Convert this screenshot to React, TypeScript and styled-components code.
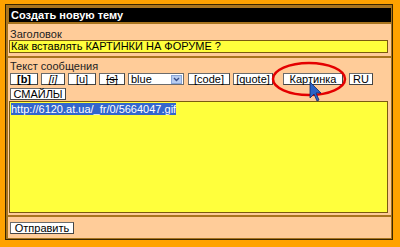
import React from "react";
import styled, { createGlobalStyle } from "styled-components";

const Global = createGlobalStyle`
  html, body {
    margin: 0;
    padding: 0;
    background: #ffa200;
    font-family: "Liberation Sans", Arial, sans-serif;
  }
`;

const Page = styled.div`
  width: 400px;
  height: 247px;
  padding: 4px 7px 0 5px;
  box-sizing: border-box;
  position: relative;
`;

const Frame = styled.div`
  border: 1px solid #3a2600;
  background: #a8741e;
  padding: 3px 1px 1px 2px;
  display: flex;
  flex-direction: column;
  gap: 2px;
`;

const Header = styled.div`
  background: #000;
  color: #fff;
  font-weight: bold;
  font-size: 11px;
  height: 14px;
  line-height: 14px;
  padding-left: 2px;
  margin-left: 1px;
`;

const Section = styled.div<{ $pad: string }>`
  background: #ffcc99;
  padding: ${(p) => p.$pad};
  font-size: 11px;
  color: #222;
`;

const Label = styled.div`
  line-height: 12px;
  padding-left: 1px;
`;

const TitleInput = styled.div`
  background: #ffff3c;
  border: 1px solid #7a5a10;
  height: 11px;
  line-height: 11px;
  color: #000;
  padding-left: 1px;
`;

const Toolbar = styled.div`
  display: flex;
  flex-wrap: wrap;
  gap: 3px 3px;
  padding-left: 1px;
  margin-top: 1px;
`;

const Btn = styled.div<{ $w: number; $style?: string }>`
  width: ${(p) => p.$w}px;
  height: 10px;
  line-height: 10px;
  background: #fff;
  border: 1px solid #6b6b6b;
  border-right-color: #444;
  border-bottom-color: #444;
  text-align: center;
  font-size: 11px;
  color: #000;
  box-sizing: content-box;
  ${(p) => p.$style || ""}
`;

const Select = styled.div`
  width: 52px;
  height: 10px;
  border: 1px solid #6b6b6b;
  background: #fff;
  display: flex;
  align-items: center;
  font-size: 11px;
  line-height: 10px;
  padding-left: 2px;
  margin-right: 1px;
  color: #000;
  > span {
    flex: 1;
  }
`;

const Arrow = styled.div`
  width: 11px;
  height: 9px;
  margin-right: 1px;
  background: #b8cdf0;
  border: 1px solid #8aa6d8;
  box-sizing: border-box;
  display: flex;
  align-items: center;
  justify-content: center;
`;

const TextArea = styled.div`
  background: #ffff3c;
  border: 1px solid #7a5a10;
  height: 106px;
  margin-top: 1px;
  padding: 2px 1px;
  box-sizing: content-box;
  line-height: 10px;
  > span {
    background: #3366cc;
    color: #fff;
  }
`;

const Submit = styled.div`
  width: 62px;
  height: 10px;
  line-height: 10px;
  border: 1px solid #6b6b6b;
  border-right-color: #444;
  border-bottom-color: #444;
  background: #fff;
  font-size: 11px;
  text-align: center;
  color: #000;
`;

const Mark = styled.svg`
  position: absolute;
  left: 271px;
  top: 61px;
  overflow: visible;
`;

export default function App() {
  return (
    <Page>
      <Global />
      <Frame>
        <Header>Создать новую тему</Header>
        <Section $pad="4px 3px 3px 1px">
          <Label>Заголовок</Label>
          <TitleInput>Как вставлять КАРТИНКИ НА ФОРУМЕ ?</TitleInput>
        </Section>
        <Section $pad="2px 3px 2px 1px">
          <Label>Текст сообщения</Label>
          <Toolbar>
            <Btn $w={26} $style="font-weight: bold;">[b]</Btn>
            <Btn $w={22} $style="font-style: italic;">[i]</Btn>
            <Btn $w={26}>[u]</Btn>
            <Btn $w={24} $style="text-decoration: line-through;">[s]</Btn>
            <Select>
              <span>blue</span>
              <Arrow>
                <svg width="7" height="5" viewBox="0 0 7 5">
                  <path d="M1 1 L3.5 3.5 L6 1" stroke="#3a4f8a" strokeWidth="1.4" fill="none" />
                </svg>
              </Arrow>
            </Select>
            <Btn $w={40}>[code]</Btn>
            <Btn $w={38}>[quote]</Btn>
            <Btn $w={58} $style="margin-left: 7px;">Картинка</Btn>
            <Btn $w={22} $style="margin-left: 3px;">RU</Btn>
            <Btn $w={54}>СМАЙЛЫ</Btn>
          </Toolbar>
          <TextArea>
            <span>http://6120.at.ua/_fr/0/5664047.gif</span>
          </TextArea>
        </Section>
        <Section $pad="5px 3px 4px 2px">
          <Submit>Отправить</Submit>
        </Section>
      </Frame>
      <Mark width="80" height="40">
        <ellipse cx="38" cy="18" rx="36" ry="16" fill="none" stroke="#e40000" strokeWidth="2.5" />
        <path d="M39 21 L39 37 L43 33 L46 40 L48 39 L45 32 L50 32 Z" fill="#2b63c6" stroke="#0a2a6a" strokeWidth="0.8" />
      </Mark>
    </Page>
  );
}
